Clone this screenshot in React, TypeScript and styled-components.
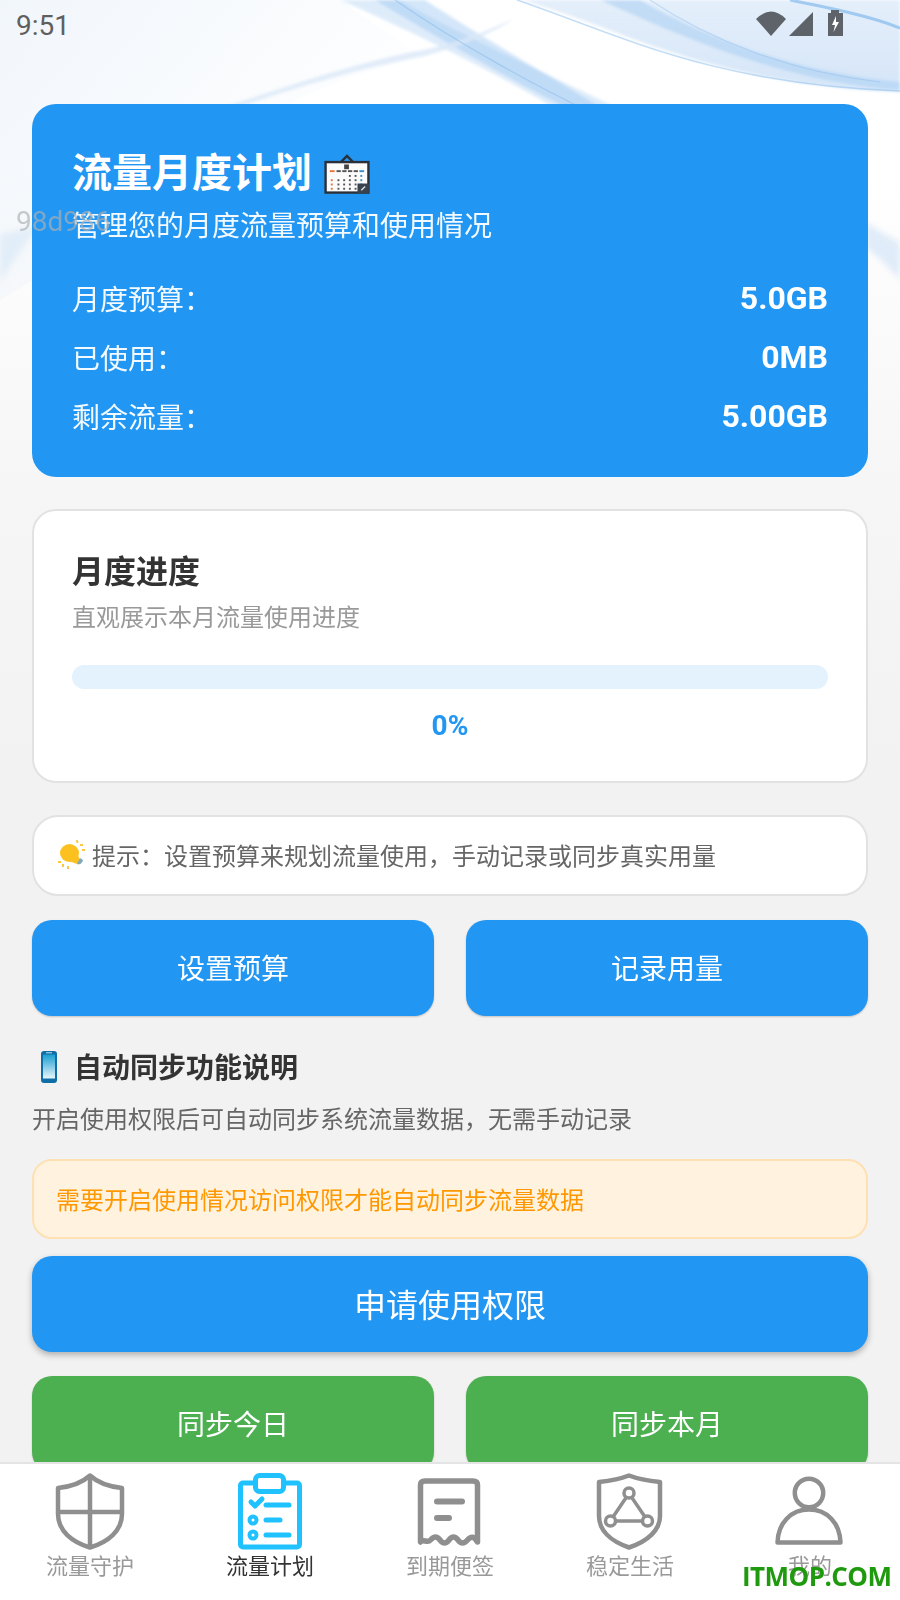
import React from "react";
import styled, { createGlobalStyle } from "styled-components";

const Global = createGlobalStyle`
  html, body { margin: 0; padding: 0; background: #f2f2f2; }
  * { box-sizing: border-box; }
`;

const FONT = `Roboto, "Noto Sans CJK SC", sans-serif`;

const Screen = styled.div`
  position: relative;
  width: 900px;
  height: 1600px;
  overflow: hidden;
  display: flex;
  flex-direction: column;
  font-family: ${FONT};
  background: linear-gradient(#ffffff 0, #ffffff 170px, #f6f6f6 480px, #f2f2f2 760px);
`;

const Backdrop = styled.svg`
  position: absolute;
  left: 0;
  top: 0;
  width: 900px;
  height: 420px;
`;

const StatusBar = styled.div`
  position: relative;
  height: 104px;
  flex: none;
  padding: 9px 0 0 16px;
  display: flex;
  justify-content: space-between;
  align-items: flex-start;
`;

const Clock = styled.span`
  font-size: 28px;
  line-height: 34px;
  color: #5f5f5f;
`;

const StatusIcons = styled.svg`
  position: absolute;
  left: 750px;
  top: 6px;
  width: 100px;
  height: 34px;
`;

const Content = styled.main`
  position: relative;
  flex: 1;
  min-height: 0;
  overflow: hidden;
  padding: 0 32px;
  display: flex;
  flex-direction: column;
`;

const Hero = styled.section`
  flex: none;
  height: 373px;
  border-radius: 24px;
  background: #2196f3;
  padding: 40px 40px 0;
  color: #fff;
`;

const HeroTitle = styled.h1`
  margin: 0;
  font-size: 40px;
  line-height: 60px;
  font-weight: 700;
  display: flex;
  align-items: center;
  gap: 12px;
`;

const HeroSub = styled.p`
  margin: 3px 0 0;
  font-size: 28px;
  line-height: 40px;
  font-weight: 400;
  color: rgba(255, 255, 255, 0.95);
`;

const Rows = styled.div`
  margin-top: 31px;
  display: flex;
  flex-direction: column;
  gap: 19px;
`;

const Row = styled.div`
  display: flex;
  justify-content: space-between;
  align-items: center;
  height: 40px;
`;

const RowLabel = styled.span`
  font-size: 28px;
  color: rgba(255, 255, 255, 0.95);
`;

const RowValue = styled.span`
  font-size: 32px;
  font-weight: 700;
`;

const ProgressCard = styled.section`
  flex: none;
  margin-top: 32px;
  height: 274px;
  border: 2px solid #e2e2e2;
  border-radius: 24px;
  background: #fff;
  padding: 38px 38px 0;
`;

const CardTitle = styled.h2`
  margin: 0;
  font-size: 32px;
  line-height: 46px;
  font-weight: 700;
  color: #333;
`;

const CardSub = styled.p`
  margin: 1px 0 0;
  font-size: 24px;
  line-height: 44px;
  color: #999;
`;

const Track = styled.div`
  margin-top: 25px;
  height: 24px;
  border-radius: 12px;
  background: #e3f2fd;
  overflow: hidden;
`;

const Fill = styled.div`
  height: 100%;
  background: #2196f3;
`;

const Percent = styled.div`
  margin-top: 19px;
  text-align: center;
  font-size: 28px;
  line-height: 36px;
  font-weight: 700;
  color: #2196f3;
`;

const Tip = styled.div`
  flex: none;
  margin-top: 32px;
  height: 81px;
  border: 2px solid #e2e2e2;
  border-radius: 26px;
  background: #fff;
  padding: 0 0 2px 23px;
  display: flex;
  align-items: center;
  gap: 5px;
  font-size: 24px;
  color: #666;
`;

const ButtonRow = styled.div`
  flex: none;
  margin-top: 24px;
  display: grid;
  grid-template-columns: 402px 402px;
  justify-content: space-between;
`;

const ActionButton = styled.button<{ $tone?: string; $big?: boolean }>`
  height: 96px;
  padding: 0 0 3px;
  border: 0;
  border-radius: 20px;
  background: ${(p) => p.$tone ?? "#2196f3"};
  color: #fff;
  font-family: ${FONT};
  font-size: ${(p) => (p.$big ? "32px" : "28px")};
  box-shadow: ${(p) => (p.$big ? "0 3px 6px rgba(0, 0, 0, 0.28)" : "0 1px 2px rgba(0, 0, 0, 0.2)")};
  flex: none;
`;

const SectionHead = styled.div`
  flex: none;
  margin-top: 31px;
  height: 40px;
  display: flex;
  align-items: center;
  gap: 17px;
  padding-left: 9px;
`;

const SectionTitle = styled.h3`
  margin: 0 0 2px;
  font-size: 28px;
  font-weight: 700;
  color: #333;
`;

const SectionDesc = styled.p`
  flex: none;
  margin: 13px 0 0;
  font-size: 24px;
  line-height: 40px;
  color: #666;
`;

const Warning = styled.div`
  flex: none;
  margin-top: 19px;
  height: 80px;
  border: 2px solid #ffe0b2;
  border-radius: 20px;
  background: #fff3e0;
  padding: 0 0 2px 22px;
  display: flex;
  align-items: center;
  font-size: 24px;
  color: #ff9800;
`;

const ApplyRow = styled.div`
  flex: none;
  margin-top: 17px;
  display: flex;
  flex-direction: column;
`;

const Nav = styled.nav`
  position: relative;
  flex: none;
  height: 138px;
  background: #fff;
  border-top: 2px solid #e4e4e4;
  display: grid;
  grid-template-columns: repeat(5, 180px);
`;

const NavItem = styled.div<{ $active?: boolean }>`
  display: flex;
  flex-direction: column;
  align-items: center;
  padding-top: 8px;
  font-size: 22px;
  line-height: 26px;
  color: ${(p) => (p.$active ? "#333" : "#999")};
`;

const NavIcon = styled.svg`
  display: block;
  width: 80px;
  height: 80px;
  margin-bottom: 2px;
`;

const Watermark = styled.span`
  position: absolute;
  left: 16px;
  top: 205px;
  font-size: 28px;
  line-height: 34px;
  color: rgba(175, 175, 175, 0.68);
  pointer-events: none;
`;

const Stamp = styled.span`
  position: absolute;
  left: 742px;
  top: 1561px;
  font-family: "Open Sans", sans-serif;
  font-weight: 700;
  font-size: 26px;
  line-height: 30px;
  letter-spacing: -0.55px;
  color: #1f9a0e;
  pointer-events: none;
`;

const CalendarEmoji = () => (
  <svg width="46" height="40" viewBox="0 0 48 42">
    <path d="M17 9 L24 2 L31 9" fill="none" stroke="#2b3038" strokeWidth="2.5" />
    <rect x="1.5" y="8.5" width="45" height="32" fill="#fbfbfb" stroke="#2b3038" strokeWidth="2.5" />
    <rect x="21" y="11" width="5" height="5" fill="#444" />
    <rect x="6" y="17" width="5" height="2" fill="#e8743b" />
    {[13, 19, 25, 31].map((x) => <rect key={x} x={x} y="17" width="4.5" height="2" fill="#555" />)}
    <rect x="37" y="17" width="5" height="2" fill="#3a8fc9" />
    {[22, 26.5, 31, 35.5].map((y) =>
      [6, 13, 19, 25, 31, 37].map((x, i) =>
        (y < 23 && i < 3) ? null : <rect key={`${x}-${y}`} x={x + 1} y={y} width="2" height="2" fill={i === 0 ? "#e8743b" : i === 5 ? "#3a8fc9" : "#555"} />
      )
    )}
    <path d="M35 41 V31 H47 V41 Z" fill="#39424d" />
    <path d="M39 38 L43 34" stroke="#ddd" strokeWidth="1.5" />
  </svg>
);

const BulbEmoji = () => (
  <svg width="30" height="30" viewBox="0 0 30 30">
    <ellipse cx="12.5" cy="13" rx="9.5" ry="9" fill="#fdc11f" />
    <path d="M12 21 L20 13 L24 22 Q24 25 20 24 Z" fill="#fdc11f" />
    <path d="M20 24 Q25 25 26 20 L23 18 Z" fill="#7fa9bd" />
    <g fill="#fdc93c">
      <rect x="19" y="0" width="2" height="3" transform="rotate(-20 20 1)" />
      <rect x="23" y="4" width="3" height="2" />
      <rect x="25" y="9" width="3" height="2" />
      <rect x="1" y="21" width="3" height="2" />
      <rect x="5" y="24" width="2" height="3" />
      <rect x="10" y="26" width="2" height="3" />
    </g>
  </svg>
);

const PhoneEmoji = () => (
  <svg width="16" height="32" viewBox="0 0 16 32">
    <defs>
      <linearGradient id="ph" x1="0" y1="0" x2="0" y2="1">
        <stop offset="0" stopColor="#1a9ed0" />
        <stop offset="1" stopColor="#e8f6fb" />
      </linearGradient>
    </defs>
    <rect x="0" y="0" width="16" height="32" rx="3" fill="#0f6ea6" />
    <rect x="2" y="3.5" width="12" height="24" fill="url(#ph)" />
    <rect x="5" y="1.3" width="6" height="1" fill="#bfe3f2" />
  </svg>
);

const GREY = "#8f8f8f";
const BLUE = "#1fc1ff";

const ShieldCross = () => (
  <NavIcon viewBox="0 0 80 80" fill="none" stroke={GREY} strokeWidth="4.5" strokeLinejoin="round">
    <path d="M40 3.5 C47 10 58 14.5 72 16 V42 C72 59 58 70 40 75.5 C22 70 8 59 8 42 V16 C22 14.5 33 10 40 3.5 Z" />
    <path d="M40 3.5 V75.5 M8 40 H72" />
  </NavIcon>
);

const Clipboard = () => (
  <NavIcon viewBox="0 0 80 80" fill="none" stroke={BLUE} strokeWidth="5" strokeLinecap="round" strokeLinejoin="round">
    <rect x="10.5" y="11" width="59" height="64" rx="2.5" />
    <rect x="25.5" y="3.5" width="28" height="16" rx="4" fill="#fff" />
    <path d="M21 30 L25 34 L32 27" strokeWidth="5" />
    <path d="M36 33 H59 M36 48 H50 M36 63 H59" />
    <circle cx="23" cy="48" r="3.5" strokeWidth="4" />
    <circle cx="23" cy="63" r="3.5" strokeWidth="4" />
  </NavIcon>
);

const Receipt = () => (
  <NavIcon viewBox="0 0 80 80" fill="none" stroke={GREY} strokeWidth="5.5" strokeLinecap="round" strokeLinejoin="round">
    <path d="M10.5 70 V13 Q10.5 9 15 9 H63 Q67.5 9 67.5 13 V70 C64 64 61 64 57.5 68 C54 72 51 72 48 68 C45 64 42 64 39 68 C36 72 33 72 30 68 C27 64 24 64 20.5 68 C17 72 14 66 10.5 70 Z" />
    <path d="M27 29.5 H52 M27 46 H39" strokeWidth="6" />
  </NavIcon>
);

const ShieldNodes = () => (
  <NavIcon viewBox="0 0 80 80" fill="none" stroke={GREY} strokeWidth="4.5" strokeLinejoin="round">
    <path d="M39 3.5 C48 7 60 9 70 10 V44 C70 58 58 69 39 75.5 C20 69 9 58 9 44 V10 C18 9 30 7 39 3.5 Z" />
    <g strokeWidth="3.5">
      <circle cx="39" cy="21" r="5" />
      <circle cx="20.5" cy="49" r="5" />
      <circle cx="57.5" cy="49" r="5" />
      <path d="M36.2 25.5 L23.3 44.5 M41.8 25.5 L54.7 44.5 M25.5 49 H52.5" />
    </g>
  </NavIcon>
);

const Person = () => (
  <NavIcon viewBox="0 0 80 80" fill="none" stroke={GREY} strokeWidth="4.5" strokeLinejoin="round">
    <circle cx="39" cy="21" r="14.2" />
    <path d="M7.5 70.5 C8 51 21 37.5 39 37.5 C57 37.5 70 51 70.5 70.5 Z" />
  </NavIcon>
);

const navItems = [
  { label: "流量守护", Icon: ShieldCross },
  { label: "流量计划", Icon: Clipboard, active: true },
  { label: "到期便签", Icon: Receipt },
  { label: "稳定生活", Icon: ShieldNodes },
  { label: "我的", Icon: Person },
];

const rows = [
  ["月度预算\uFF1A", "5.0GB"],
  ["已使用\uFF1A", "0MB"],
  ["剩余流量\uFF1A", "5.00GB"],
];

const tipText = "提示\uFF1A设置预算来规划流量使用\uFF0C手动记录或同步真实用量";
const syncDesc = "开启使用权限后可自动同步系统流量数据\uFF0C无需手动记录";

const usedPercent = 0;

export default function App() {
  return (
    <Screen>
      <Global />
      <Backdrop viewBox="0 0 900 420" fill="none">
        <defs>
          <linearGradient id="fadeL" x1="0" y1="0" x2="0.9" y2="0.55">
            <stop offset="0" stopColor="#e3edf7" stopOpacity="0.5" />
            <stop offset="1" stopColor="#e3edf7" stopOpacity="0" />
          </linearGradient>
          <linearGradient id="fadeR" x1="0" y1="0" x2="0" y2="1">
            <stop offset="0" stopColor="#dbe9f8" stopOpacity="0.75" />
            <stop offset="1" stopColor="#cde1f7" stopOpacity="0.85" />
          </linearGradient>
          <filter id="soft1"><feGaussianBlur stdDeviation="1.6" /></filter>
          <filter id="soft3"><feGaussianBlur stdDeviation="3" /></filter>
        </defs>
        <path d="M0 0 H340 C380 28 400 42 425 58 C340 75 260 105 200 180 L0 300 Z" fill="url(#fadeL)" />
        <g filter="url(#soft3)">
          <path d="M0 282 C12 262 24 245 40 225 L0 235 Z" fill="#d9e8f7" opacity="0.7" />
          <path d="M866 222 C880 232 890 238 900 242 V280 C890 268 880 258 866 248 Z" fill="#d3e4f6" opacity="0.7" />
        </g>
        <g filter="url(#soft1)">
          <path d="M520 0 C610 22 700 84 900 92 V0 Z" fill="url(#fadeR)" />
          <path d="M340 0 C420 35 520 85 560 112 H625 C540 70 450 30 400 0 Z" fill="#c3dcf5" opacity="0.55" />
          <path d="M375 0 C445 42 525 88 575 112 H608 C540 70 470 30 425 0 Z" fill="#8dbdee" opacity="0.38" />
          <path d="M225 112 C300 85 375 65 425 56 C465 45 495 32 515 18 C490 30 450 46 412 52 C350 65 290 85 210 112 Z" fill="#dbe9f7" opacity="0.8" />
          <path d="M640 0 C720 45 800 72 900 82 V90 C790 82 700 45 600 0 Z" fill="#a8cdf2" opacity="0.55" />
          <path d="M465 0 C540 30 580 50 640 84 C600 55 560 30 510 0 Z" fill="#ffffff" opacity="0.6" />
        </g>
        <path d="M517 0 C620 35 710 84 900 91" stroke="#7fb5ea" strokeWidth="1.5" opacity="0.45" />
        <path d="M790 0 C830 8 870 16 900 28" stroke="#5fa5e8" strokeWidth="3" opacity="0.5" />
        <path d="M650 0 C710 40 790 72 880 82" stroke="#7db4ea" strokeWidth="1.2" opacity="0.35" />
        <path d="M395 0 C460 45 540 88 590 112" stroke="#6ba9e8" strokeWidth="1.2" opacity="0.35" />
      </Backdrop>
      <StatusBar>
        <Clock>9:51</Clock>
        <StatusIcons viewBox="750 6 100 34">
          <path d="M756 19 Q771 4 786 19 L771 36 Z" fill="#5d6368" />
          <path d="M789 36 L813 12 V36 Z" fill="#5d6368" />
          <path d="M831 13 V10 H839 V13 H843 V36 H828 V13 Z" fill="#5d6368" />
          <path d="M836 16 L832 25 H835 L833.5 32 L839 22 H836 Z" fill="#fff" />
        </StatusIcons>
      </StatusBar>
      <Content>
        <Hero>
          <HeroTitle>流量月度计划<CalendarEmoji /></HeroTitle>
          <HeroSub>管理您的月度流量预算和使用情况</HeroSub>
          <Rows>
            {rows.map(([label, value]) => (
              <Row key={label}>
                <RowLabel>{label}</RowLabel>
                <RowValue>{value}</RowValue>
              </Row>
            ))}
          </Rows>
        </Hero>
        <ProgressCard>
          <CardTitle>月度进度</CardTitle>
          <CardSub>直观展示本月流量使用进度</CardSub>
          <Track>
            <Fill style={{ width: `${usedPercent}%` }} />
          </Track>
          <Percent>{usedPercent}%</Percent>
        </ProgressCard>
        <Tip><BulbEmoji />{tipText}</Tip>
        <ButtonRow>
          <ActionButton>设置预算</ActionButton>
          <ActionButton>记录用量</ActionButton>
        </ButtonRow>
        <SectionHead>
          <PhoneEmoji />
          <SectionTitle>自动同步功能说明</SectionTitle>
        </SectionHead>
        <SectionDesc>{syncDesc}</SectionDesc>
        <Warning>需要开启使用情况访问权限才能自动同步流量数据</Warning>
        <ApplyRow>
          <ActionButton $big>申请使用权限</ActionButton>
        </ApplyRow>
        <ButtonRow>
          <ActionButton $tone="#4caf50">同步今日</ActionButton>
          <ActionButton $tone="#4caf50">同步本月</ActionButton>
        </ButtonRow>
      </Content>
      <Nav>
        {navItems.map(({ label, Icon, active }) => (
          <NavItem key={label} $active={active}>
            <Icon />
            {label}
          </NavItem>
        ))}
      </Nav>
      <Watermark>98d986</Watermark>
      <Stamp>ITMOP.COM</Stamp>
    </Screen>
  );
}
